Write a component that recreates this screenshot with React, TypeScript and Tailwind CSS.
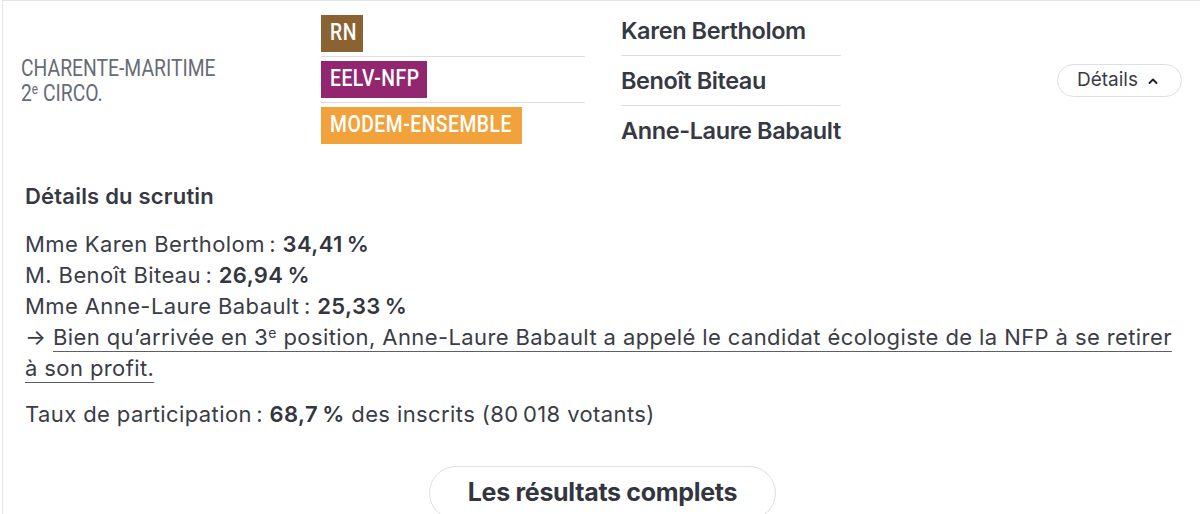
const parties = [
  { label: "RN", color: "bg-[#8b6332]", width: "w-[42px]" },
  { label: "EELV-NFP", color: "bg-[#93276f]", width: "w-[106px]" },
  { label: "MODEM-ENSEMBLE", color: "bg-[#f1a23b]", width: "w-[201px]" },
];

const candidates = ["Karen Bertholom", "Benoît Biteau", "Anne-Laure Babault"];

// narrow no-break spaces, as in French typography
const results = [
  { name: "Mme Karen Bertholom", score: "34,41\u202F%" },
  { name: "M. Benoît Biteau", score: "26,94\u202F%" },
  { name: "Mme Anne-Laure Babault", score: "25,33\u202F%" },
];

const sans = "font-['Inter','Liberation_Sans',sans-serif]";
// no condensed family on the box, so squeeze Roboto horizontally
const narrow = "font-['Roboto','Liberation_Sans',sans-serif] inline-block origin-left scale-x-[0.84] whitespace-nowrap";

export default function App() {
  return (
    <div className="h-[514px] w-[1200px] overflow-hidden bg-white">
      <div className={`ml-[2px] h-full border-l border-t border-[#e4e4e6] text-[#363943] ${sans}`}>
        {/* Header row */}
        <div className="flex h-[155px] items-start pl-[18px] pr-[18px]">
          <div className="w-[300px] pt-[55px] text-[23px] leading-[25px] text-[#666b76]">
            <div className={narrow}>CHARENTE-MARITIME</div>
            <div className={narrow}>
              2<sup className="text-[14px] leading-none">e</sup> CIRCO.
            </div>
          </div>

          <div className="w-[264px] pt-[14px]">
            {parties.map((p, i) => (
              <div
                key={p.label}
                className={`flex ${i < parties.length - 1 ? "border-b border-[#dcdde0] pb-[4px] mb-[4px]" : ""}`}
              >
                <span className={`${p.color} ${p.width} flex h-[37px] items-center overflow-hidden pl-[9px]`}>
                  <span className={`${narrow} text-[23px] font-medium tracking-[0.6px] text-white`}>{p.label}</span>
                </span>
              </div>
            ))}
          </div>

          <div className="ml-[36px] w-[220px] pt-[5px]">
            {candidates.map((c, i) => (
              <div
                key={c}
                className={`flex h-[50px] items-center whitespace-nowrap text-[23.5px] font-semibold tracking-[-0.4px] ${
                  i < candidates.length - 1 ? "border-b border-[#dcdde0]" : ""
                }`}
              >
                {c}
              </div>
            ))}
          </div>

          <div className="flex flex-1 justify-end pt-[63px]">
            <button className="flex h-[33px] items-center gap-[9px] rounded-full border border-[#dedfe2] pl-[19px] pr-[22px] text-[19px] text-[#3a3d47]">
              Détails
              <svg width="12" height="12" viewBox="0 0 12 12" fill="none">
                <path d="M2.5 8 L6 4.5 L9.5 8" stroke="#1f2128" strokeWidth="1.9" strokeLinecap="round" strokeLinejoin="round" />
              </svg>
            </button>
          </div>
        </div>

        {/* Details */}
        <div className="pl-[22px] pr-[20px] pt-[25px]">
          <h3 className="text-[22px] font-semibold leading-[31px] tracking-[0.2px]">Détails du scrutin</h3>

          <div className="mt-[17px] text-[22px] leading-[31px] tracking-[0.4px] text-[#3a3d46]">
            {results.map((r) => (
              <div key={r.name}>
                {r.name}{"\u202F"}: <span className="font-semibold text-[#33363f]">{r.score}</span>
              </div>
            ))}
            <p>
              →{" "}
              <a className="underline decoration-1 decoration-[#5c5f68] underline-offset-[6px]">
                Bien qu’arrivée en 3<sup className="text-[14px] leading-none">e</sup> position, Anne-Laure Babault a appelé le candidat écologiste de la NFP à se retirer à son profit.
              </a>
            </p>
          </div>

          <p className="mt-[15px] text-[22px] leading-[31px] tracking-[0.4px] text-[#3a3d46]">
            Taux de participation{"\u202F"}: <span className="font-semibold text-[#33363f]">68,7{"\u202F"}%</span> des inscrits (80{"\u202F"}018 votants)
          </p>

          <div className="mt-[36px] flex justify-center">
            <button className="h-[54px] w-[347px] rounded-full border border-[#dedfe2] text-[25px] font-bold tracking-[-0.3px] text-[#33363f]">
              Les résultats complets
            </button>
          </div>
        </div>
      </div>
    </div>
  );
}
